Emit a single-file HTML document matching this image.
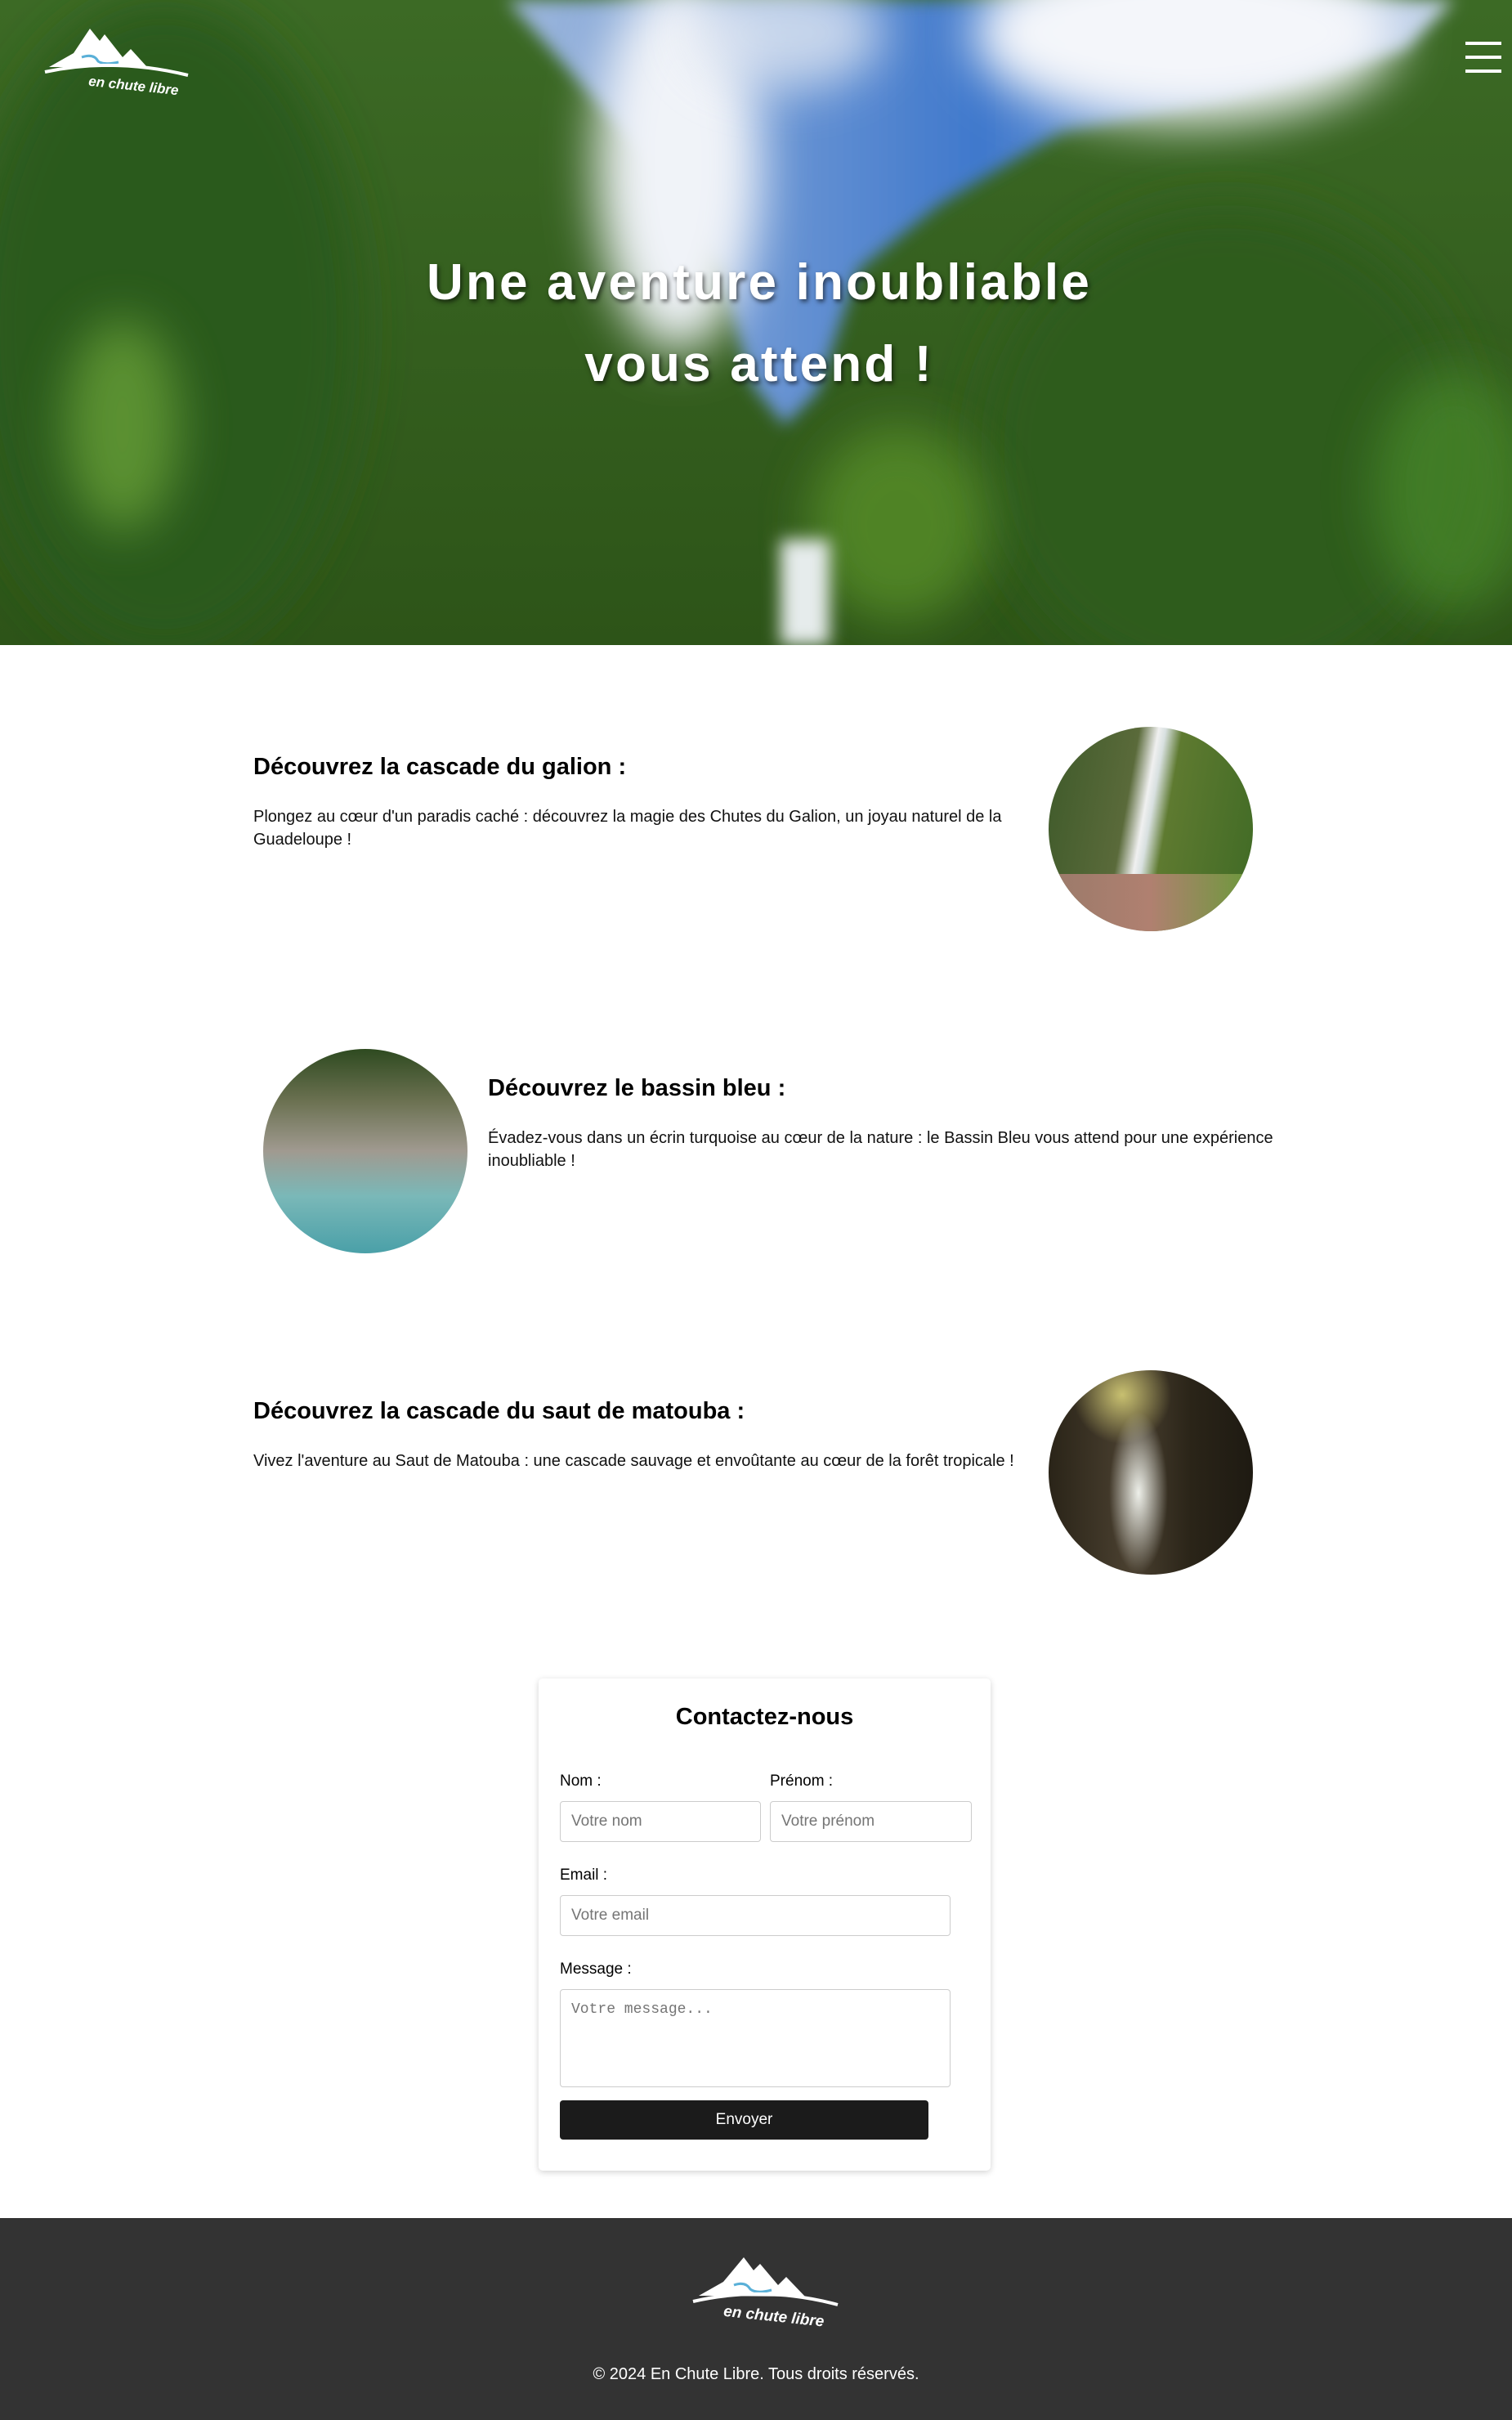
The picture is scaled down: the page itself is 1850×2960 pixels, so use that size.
<!DOCTYPE html>
<html><head><meta charset="utf-8"><style>
*{margin:0;padding:0;box-sizing:border-box}
body{width:1850px;height:2960px;position:relative;background:#fff;font-family:"Liberation Sans",Arial,sans-serif;color:#111;overflow:hidden}
.hero{position:absolute;left:0;top:0;width:1850px;height:789px;overflow:hidden;background:#35621f}
.hero h1{position:absolute;left:4px;width:1850px;text-align:center;color:#fff;font-size:62px;font-weight:bold;letter-spacing:3.2px;line-height:100px;top:296px;text-shadow:2px 3px 6px rgba(0,0,0,.6)}
.burger{position:absolute;left:1793px;top:51px;width:44px}
.burger div{height:4px;background:#fff;margin-bottom:13px}
.sec{position:absolute}
.sec h2{font-size:29px;font-weight:bold;color:#000}
.sec p{font-size:20px;line-height:28px;margin-top:30px}
.circ{position:absolute;width:250px;height:250px;border-radius:50%;overflow:hidden}
.card{position:absolute;left:659px;top:2053px;width:553px;height:602px;background:#fff;border-radius:5px;box-shadow:0 2px 8px rgba(0,0,0,.18)}
.card h3{position:absolute;top:31px;width:100%;text-align:center;font-size:29px;font-weight:bold;color:#000}
.lbl{position:absolute;font-size:19px;color:#000}
.in{position:absolute;border:1px solid #ccc;border-radius:4px;font-size:19px;color:#757575;padding-left:13px;line-height:48px;background:#fff}
.btn{position:absolute;left:26px;top:516px;width:451px;height:48px;background:#1b1b1b;border-radius:4px;color:#fff;font-size:19px;text-align:center;line-height:48px}
footer{position:absolute;left:0;top:2713px;width:1850px;height:247px;background:#333}
</style></head><body>
<div class="hero">
<svg style="position:absolute;left:0;top:0" width="1850" height="789" viewBox="0 0 1850 789">
<defs>
<filter id="b" x="-100%" y="-100%" width="300%" height="300%"><feGaussianBlur stdDeviation="30"/></filter>
<filter id="b2" x="-50%" y="-50%" width="200%" height="200%"><feGaussianBlur stdDeviation="10"/></filter>
<linearGradient id="sky" x1="0" y1="0" x2="1" y2="0"><stop offset="0" stop-color="#9fb8dc"/><stop offset=".5" stop-color="#3f78cc"/><stop offset="1" stop-color="#c8d6ea"/></linearGradient>
<linearGradient id="g" x1="0" y1="0" x2="0" y2="1"><stop offset="0" stop-color="#3c6a25"/><stop offset="1" stop-color="#2d5418"/></linearGradient>
</defs>
<rect width="1850" height="789" fill="url(#g)"/>
<path d="M620 0 L1780 0 L1720 60 L1500 120 L1300 160 L1150 250 L1050 330 L1000 480 L960 520 L920 470 L880 330 L800 200 L700 90 Z" fill="url(#sky)" filter="url(#b2)"/>
<ellipse cx="830" cy="200" rx="100" ry="230" fill="#f0f3f8" filter="url(#b)"/>
<ellipse cx="960" cy="40" rx="120" ry="70" fill="#dfe6f2" filter="url(#b)" opacity=".8"/>
<ellipse cx="1450" cy="40" rx="260" ry="110" fill="#f4f6fa" filter="url(#b)"/>
<ellipse cx="200" cy="400" rx="240" ry="400" fill="#2c5a1a" filter="url(#b)"/>
<ellipse cx="1500" cy="550" rx="300" ry="300" fill="#2f5c1d" filter="url(#b)"/>
<ellipse cx="150" cy="520" rx="70" ry="130" fill="#6fa83a" filter="url(#b)" opacity=".7"/>
<ellipse cx="1100" cy="640" rx="110" ry="120" fill="#5d962c" filter="url(#b)" opacity=".7"/>
<ellipse cx="1780" cy="600" rx="100" ry="150" fill="#4a8a2c" filter="url(#b)" opacity=".7"/>
<rect x="955" y="660" width="60" height="129" fill="#e6ecec" filter="url(#b2)"/>
</svg>
<svg style="position:absolute;left:50px;top:20px" width="185" height="100" viewBox="0 0 185 100">
<path d="M10 62 L40 45 L60 15 L72 30 L78 22 L100 50 L110 40 L130 62 Z" fill="#fff"/>
<path d="M50 50 Q65 45 70 55 Q78 60 95 56" stroke="#5ab0d8" stroke-width="3" fill="none"/>
<path d="M5 68 Q90 50 180 72" stroke="#fff" stroke-width="4" fill="none"/>
<text x="58" y="88" fill="#fff" font-size="17" font-weight="bold" font-style="italic" font-family="Liberation Sans" transform="rotate(6 90 85)">en chute libre</text>
</svg>
<div class="burger"><div></div><div></div><div></div></div>
<h1>Une aventure inoubliable<br>vous attend !</h1>
</div>

<div class="sec" style="left:310px;top:922px;width:940px"><h2>Découvrez la cascade du galion :</h2><p>Plongez au cœur d'un paradis caché : découvrez la magie des Chutes du Galion, un joyau naturel de la Guadeloupe !</p></div>
<div class="circ" style="left:1283px;top:889px;background:linear-gradient(100deg,#3e5a2a 0,#5a6a3a 38%,#f0f0f0 46%,#d8e0e0 49%,#5e7a30 56%,#3f6a25 100%)"><div style="position:absolute;left:0;bottom:0;width:250px;height:70px;background:linear-gradient(90deg,#9a7a6a,#b08070 50%,#6a9a3a)"></div></div>

<div class="sec" style="left:597px;top:1315px;width:980px"><h2>Découvrez le bassin bleu :</h2><p>Évadez-vous dans un écrin turquoise au cœur de la nature : le Bassin Bleu vous attend pour une expérience inoubliable !</p></div>
<div class="circ" style="left:322px;top:1283px;background:linear-gradient(180deg,#2e4a20 0,#6a7050 25%,#a09a90 50%,#7ab8b8 72%,#4aa0a8 100%)"></div>

<div class="sec" style="left:310px;top:1710px;width:980px"><h2>Découvrez la cascade du saut de matouba :</h2><p>Vivez l'aventure au Saut de Matouba : une cascade sauvage et envoûtante au cœur de la forêt tropicale !</p></div>
<div class="circ" style="left:1283px;top:1676px;background:radial-gradient(ellipse 40px 110px at 110px 150px,#eef0ea,rgba(230,230,220,0) 90%),radial-gradient(circle at 90px 30px,#c8c070,rgba(200,190,110,0) 60px),linear-gradient(90deg,#2a2418,#4a4030 40%,#2a2418 70%,#1e1a12)"></div>

<div class="card">
<h3>Contactez-nous</h3>
<div class="lbl" style="left:26px;top:115px">Nom :</div>
<div class="lbl" style="left:283px;top:115px">Prénom :</div>
<div class="in" style="left:26px;top:150px;width:246px;height:50px">Votre nom</div>
<div class="in" style="left:283px;top:150px;width:247px;height:50px">Votre prénom</div>
<div class="lbl" style="left:26px;top:230px">Email :</div>
<div class="in" style="left:26px;top:265px;width:478px;height:50px">Votre email</div>
<div class="lbl" style="left:26px;top:345px">Message :</div>
<div class="in" style="left:26px;top:380px;width:478px;height:120px;font-family:'Liberation Mono',monospace;font-size:18px;line-height:40px;padding-top:4px">Votre message...</div>
<div class="btn">Envoyer</div>
</div>

<footer>
<svg style="position:absolute;left:840px;top:30px" width="190" height="110" viewBox="0 0 190 110">
<path d="M15 65 L45 48 L70 18 L82 34 L90 26 L112 52 L122 42 L145 66 Z" fill="#fff"/>
<path d="M58 52 Q72 47 78 57 Q86 63 104 58" stroke="#5ab0d8" stroke-width="3" fill="none"/>
<path d="M8 72 Q95 52 185 76" stroke="#fff" stroke-width="4" fill="none"/>
<text x="45" y="95" fill="#fff" font-size="19" font-weight="bold" font-style="italic" font-family="Liberation Sans" transform="rotate(6 95 90)">en chute libre</text>
</svg>
<div style="position:absolute;top:180px;width:1850px;text-align:center;color:#fff;font-size:20px">© 2024 En Chute Libre. Tous droits réservés.</div>
</footer>
</body></html>
